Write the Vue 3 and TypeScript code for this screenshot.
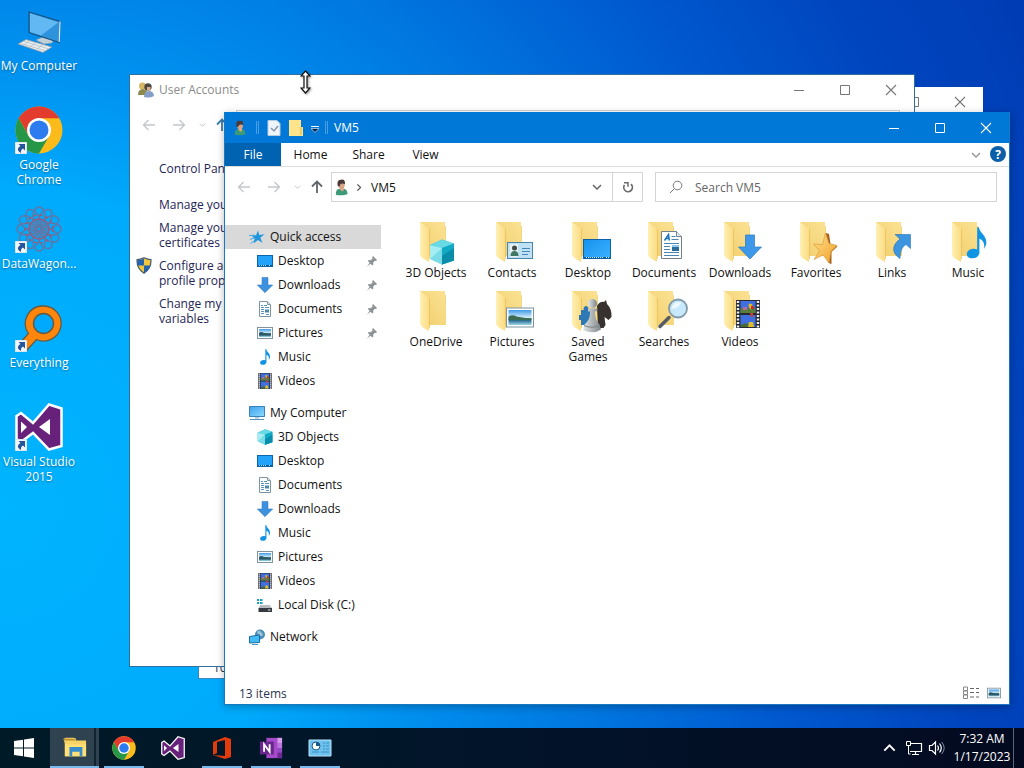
<script setup lang="ts">
interface Shortcut { icon: string; label: string; linked: boolean }
interface TreeItem { icon: string; label: string; pinned?: boolean }
interface TreeGroup { icon: string; label: string; selected?: boolean; items: TreeItem[] }
interface TaskItem { icon: string; label: string; running: boolean; active?: boolean }

const shortcuts: Shortcut[] = [
  { icon: 'pc', label: 'My Computer', linked: false },
  { icon: 'chrome', label: 'Google Chrome', linked: true },
  { icon: 'wagon', label: 'DataWagon...', linked: true },
  { icon: 'everything', label: 'Everything', linked: true },
  { icon: 'vs', label: 'Visual Studio 2015', linked: true },
]

const tree: TreeGroup[] = [
  {
    icon: 'star', label: 'Quick access', selected: true,
    items: [
      { icon: 'desktop', label: 'Desktop', pinned: true },
      { icon: 'download', label: 'Downloads', pinned: true },
      { icon: 'document', label: 'Documents', pinned: true },
      { icon: 'picture', label: 'Pictures', pinned: true },
      { icon: 'music', label: 'Music' },
      { icon: 'video', label: 'Videos' },
    ],
  },
  {
    icon: 'monitor', label: 'My Computer',
    items: [
      { icon: 'cube', label: '3D Objects' },
      { icon: 'desktop', label: 'Desktop' },
      { icon: 'document', label: 'Documents' },
      { icon: 'download', label: 'Downloads' },
      { icon: 'music', label: 'Music' },
      { icon: 'picture', label: 'Pictures' },
      { icon: 'video', label: 'Videos' },
      { icon: 'disk', label: 'Local Disk (C:)' },
    ],
  },
  { icon: 'network', label: 'Network', items: [] },
]

const folders: { icon: string; label: string }[] = [
  { icon: 'f-cube', label: '3D Objects' },
  { icon: 'f-contacts', label: 'Contacts' },
  { icon: 'f-desktop', label: 'Desktop' },
  { icon: 'f-documents', label: 'Documents' },
  { icon: 'f-downloads', label: 'Downloads' },
  { icon: 'f-favorites', label: 'Favorites' },
  { icon: 'f-links', label: 'Links' },
  { icon: 'f-music', label: 'Music' },
  { icon: 'folder', label: 'OneDrive' },
  { icon: 'f-pictures', label: 'Pictures' },
  { icon: 'f-games', label: 'Saved Games' },
  { icon: 'f-searches', label: 'Searches' },
  { icon: 'f-videos', label: 'Videos' },
]

const accountLinks: { lines: string[]; shield?: boolean }[] = [
  { lines: ['Manage your'] },
  { lines: ['Manage your', 'certificates'] },
  { lines: ['Configure ad', 'profile prope'], shield: true },
  { lines: ['Change my', 'variables'] },
]

const tasks: TaskItem[] = [
  { icon: 'explorer', label: 'File Explorer', running: true, active: true },
  { icon: 'chrome', label: 'Google Chrome', running: true },
  { icon: 'vs', label: 'Visual Studio', running: false },
  { icon: 'office', label: 'Office', running: true },
  { icon: 'onenote', label: 'OneNote', running: true },
  { icon: 'panel', label: 'Control Panel', running: true },
]
</script>

<template>
  <div class="screen">
    <svg class="sprites" width="0" height="0" aria-hidden="true">
      <defs>
        <linearGradient id="gFlap" x1="0" x2="1" y1="0" y2="0"><stop offset="0" stop-color="#fff0b4" /><stop offset="1" stop-color="#fbdc83" /></linearGradient>
        <linearGradient id="gBack" x1="0" x2="1" y1="1" y2="0"><stop offset="0" stop-color="#f2ce6c" /><stop offset="1" stop-color="#fbe294" /></linearGradient>
        <linearGradient id="gBlue" x1="0" x2="1" y1="0" y2="1"><stop offset="0" stop-color="#1592ee" /><stop offset="1" stop-color="#3db2ff" /></linearGradient>
        <linearGradient id="gScreen" x1="0" x2="1" y1="0" y2="1"><stop offset="0" stop-color="#3c9fec" /><stop offset="1" stop-color="#8fdcff" /></linearGradient>
        <linearGradient id="gSky" x1="0" x2="0" y1="0" y2="1"><stop offset="0" stop-color="#3f9be8" /><stop offset=".5" stop-color="#d3ecfa" /><stop offset=".52" stop-color="#3f7868" /><stop offset=".7" stop-color="#2c6f8c" /><stop offset="1" stop-color="#9cd8ee" /></linearGradient>
        <linearGradient id="gStar" x1="0" x2="1" y1="0" y2="1"><stop offset="0" stop-color="#ffe08a" /><stop offset="1" stop-color="#f0a02c" /></linearGradient>
        <linearGradient id="gPiece" x1="0" x2="1" y1="0" y2="0"><stop offset="0" stop-color="#e3e7e9" /><stop offset="1" stop-color="#7d8488" /></linearGradient>
      </defs>

      <symbol id="star" viewBox="0 0 16 16"><path d="M9 1.500 10.300 6l5.200-.8-4.200 3.600L13.500 14 9 11l-4.500 3.500 1.200-5L2.500 6.700l4.600-.4z" fill="#2196dd" /><path d="M0 6.500l6-.3M1 10.500l4-1.500M1.500 14.500l4-3" stroke="#46aee6" fill="none" /></symbol>
      <symbol id="desktop" viewBox="0 0 28 20"><rect x=".5" y=".5" width="27" height="19" fill="url(#gBlue)" stroke="#0c61a8" /><path d="M1 18.500h26" stroke="#0b5f9f" /><path d="M3 18.500h18M23 18.500h3" stroke="#cfe8fb" stroke-dasharray="1 1" /></symbol>
      <symbol id="desktop-s" viewBox="0 0 16 16"><rect x=".5" y="2.500" width="15" height="11" fill="#22a3fa" stroke="#0c66a8" /><path d="M1 12.500h14" stroke="#0b5b96" /><path d="M2 12.500h7M12 12.500h2" stroke="#a5daff" stroke-dasharray="1 1" /></symbol>
      <symbol id="download" viewBox="0 0 16 16"><path d="M5 0.500h6V8h4.700L8 15.700.3 8H5z" fill="#3d92e0" stroke="#2470b8" stroke-width=".5" /></symbol>
      <symbol id="document" viewBox="0 0 16 16"><path d="M2.500.5h8l3 3v12h-11z" fill="#fff" stroke="#7f94a2" /><path d="M10.500.5v3h3" fill="#dce8ef" stroke="#7f94a2" /><path d="M4 4.500h2M7 4.500h3M4 6.500h3M8 6.500h4M4 8.500h3M4 10.500h3M4 12.500h3M9 13.500h3" stroke="#5a93b6" /><rect x="8" y="8.500" width="4" height="3" fill="#4a88ad" /></symbol>
      <symbol id="picture" viewBox="0 0 28 20"><rect x=".5" y=".5" width="27" height="19" fill="#fff" stroke="#7b93a4" /><rect x="2.500" y="2.500" width="23" height="15" fill="url(#gSky)" /><path d="M2.500 9q4-2.500 8 0l15 2.500v1h-23z" fill="#3c6d54" /></symbol>
      <symbol id="picture-s" viewBox="0 0 16 16"><rect x=".5" y="2.500" width="15" height="11" fill="#fff" stroke="#8394a1" /><rect x="2" y="4" width="12" height="8" fill="url(#gSky)" /><path d="M2 8q2-2 5 0l7 1.500v1H2z" fill="#2d5866" /></symbol>
      <symbol id="music" viewBox="0 0 16 24"><path d="M8.500 0h1.300c.3 4 5.700 6 5.700 11.500 0 2-.7 3.500-1.800 5 .8-4.200-.6-6.700-3.500-7.800V19c0 3-2.400 4.700-5.200 4.700C2.600 23.700.6 22.500.6 20.500c0-2.400 2.600-4.100 5.400-4.100.9 0 1.700.1 2.500.5z" fill="#1194e4" /></symbol>
      <symbol id="video" viewBox="0 0 24 28"><path d="M0 0h24v28H0z" fill="#272b31" /><path d="M2 1v27M22 1v27" stroke="#eef0f2" stroke-width="2.400" stroke-dasharray="2 1.500" /><path d="M4.500 1h15v12h-15zM4.500 15h15v12h-15z" fill="#3f6fe0" /><path d="M4.500 9c4-3 6 1 8-1s5 1 7 0v5h-15z" fill="#5b7d3a" /><path d="M14 3.500c3 0 3 3 1.500 6-3-1-4-6-1.500-6z" fill="#e4b81a" /><path d="M15 6h3v3h-3z" fill="#c52d2a" /><path d="M7 7h4v3H7z" fill="#b66aa6" /><path d="M13 22h4l1 5h-6z" fill="#e0bd23" /><path d="M4.500 25l5-2 3 2-1 2h-7z" fill="#466b35" /><path d="M14 13h3v4h-2z" fill="#d33e28" /></symbol>
      <symbol id="cube" viewBox="0 0 26 26"><path d="m13 .5 12 4v17l-12 4-12-6V6z" fill="#33bfd3" /><path d="M1 6 13 .5l12 4L13 9z" fill="#69d9e6" /><path d="M1 6l12 3v16.500L1 20z" fill="#a5edf2" /><path d="M13 9l12-4.500v17l-12 4z" fill="#12a9c4" /><path d="M1 20 13 9v16.500z" fill="#79dce6" /><path d="m13 17 12-8v12.500l-12 4z" fill="#098dab" /></symbol>
      <symbol id="monitor" viewBox="0 0 16 16"><path d="M0 1.500h16v10H0z" fill="url(#gScreen)" /><path d="M.5 1.500h15v10H.5z" fill="none" stroke="#3983b8" /><path d="M6 12h4v1.500H6z" fill="#a9c4d3" /><path d="M1 14.500h14" stroke="#4c8fb9" /></symbol>
      <symbol id="disk" viewBox="0 0 16 16"><path d="M0 2h2v2H0zM3 2h2.500v2H3zM0 5h2v2H0zM3 5h2.500v2H3z" fill="#17a4b9" /><path d="M3.500 8h9l2.500 3H1.500z" fill="#b4babd" /><path d="M1.500 11H15v4H1.500z" fill="#343a3f" /><path d="M11 13h2.500" stroke="#d8f3df" /></symbol>
      <symbol id="network" viewBox="0 0 16 16"><circle cx="11" cy="5.500" r="5" fill="#4b8fb9" /><path d="M8 3c2-3 4 0 6 2-1 4-4 2-6-2z" fill="#9dc4d2" /><path d="M.5 7.500 10.500 6v7.500l-10 .5z" fill="#45bbf5" stroke="#1a70a4" /><path d="M3 15.500h6" stroke="#4a9acb" /></symbol>
      <symbol id="pin" viewBox="0 0 12 12"><path d="m7 1 4 4-1 1-1-.2L7.200 7.600l.2 2L6.300 10.500 4.500 8.700 1 11.500l2.600-3.700-1.800-1.700.9-1 2 .2 1.800-1.700L6.200 2z" fill="#8d9498" /></symbol>
      <symbol id="user" viewBox="0 0 16 20"><path d="M1 19c0-5 1-7 5-7.500h4c4 0 5 3 5.500 6.500-3 2-11 2-14.500 1z" fill="#3d9a77" /><path d="M6 10h4.500l.5 3-2 2-3-2.500z" fill="#dca987" /><ellipse cx="8" cy="6.500" rx="4" ry="5" fill="#d9a384" /><path d="M3.500 8C2 3 4 0 8 .5c3-1 5 2 4 5.500C9 4.500 6 5 5.500 9z" fill="#493b39" /></symbol>
      <symbol id="users" viewBox="0 0 16 16"><circle cx="4.500" cy="4" r="3.500" fill="#d5b762" /><path d="M0 13q0-6 5-6 4 0 5 6z" fill="#8d8a4b" /><circle cx="10" cy="5" r="3.700" fill="#4d483f" /><path d="M9 5h3.500v3.500H9z" fill="#d7b292" /><path d="M6 15q0-6 5-6 4.500 0 5 5-4 2.500-10 1z" fill="#859fca" /></symbol>
      <symbol id="shield" viewBox="0 0 16 18"><path d="M8 .8q4 2 7.300 2Q16 12 8 17.300 0 12 .7 2.800 4 2.800 8 .8z" fill="#f0c73f" stroke="#46596c" stroke-width="1.300" /><path d="M8 1.500V9H1.200Q.8 6 1.200 3.300 5 3 8 1.500zM8 9h6.600q-1.200 5-6.600 7.700z" fill="#2463ad" /></symbol>

      <symbol id="folder" viewBox="0 0 48 48"><path d="M8 4h25v18h1v16H17z" fill="url(#gBack)" /><path d="M33.500 8v29.500" stroke="#f4d783" /><path d="M8 4l9 7v33l-7-4-2-3z" fill="url(#gFlap)" /><path d="M17.500 11v30" stroke="#e5bf5c" stroke-width=".7" /></symbol>
      <symbol id="f-cube" viewBox="0 0 48 48"><use href="#folder" width="48" height="48" /><use href="#cube" x="17" y="21" width="26" height="26" /></symbol>
      <symbol id="f-contacts" viewBox="0 0 48 48"><use href="#folder" width="48" height="48" /><rect x="19.500" y="24.500" width="25" height="16" fill="#bfe1f3" stroke="#4a86ab" /><path d="M22 26h8v13h-8z" fill="#e9f2f2" /><circle cx="26.500" cy="30" r="2.500" fill="#3e4948" /><path d="M22.500 38q0-5 4-5t4 5z" fill="#407a62" /><path d="M34 30.500h8M34 33.500h8M34 36.500h6" stroke="#4588b8" /></symbol>
      <symbol id="f-desktop" viewBox="0 0 48 48"><use href="#folder" width="48" height="48" /><use href="#desktop" x="19" y="21" width="28" height="20" /></symbol>
      <symbol id="f-documents" viewBox="0 0 48 48"><use href="#folder" width="48" height="48" /><path d="M21.500 13.500h15l5 5v22h-20z" fill="#fff" stroke="#74828d" /><path d="M36.500 13.500v5h5" fill="#e2eaf0" stroke="#74828d" /><path d="m24.500 22.500 4-6 .8 6M26 20.500h3" fill="none" stroke="#1672bd" stroke-width="1.500" /><path d="M31.500 18.500h4M31.500 21.500h7M24 25.500h15M24 28.500h6M24 31.500h6M24 34.500h15M24 37.500h15" stroke="#4c86b2" /><path d="M32 27h7v6h-7z" fill="#2c6c9b" /><path d="M32 27h7v2h-7z" fill="#8ec9ec" /></symbol>
      <symbol id="f-downloads" viewBox="0 0 48 48"><use href="#folder" width="48" height="48" /><path d="M29.500 17h9v12h7L34 41 22.500 29h7z" fill="#3d98ea" stroke="#2978bd" stroke-width=".7" /></symbol>
      <symbol id="f-favorites" viewBox="0 0 48 48"><use href="#folder" width="48" height="48" /><path d="m34 15 3 1 1.500 10 7 2.500-6 5.500L39.500 46l-3-1z" fill="#a4621c" /><path d="m33.500 15 3.500 10.500 8 2-6 6L37 45l-6-8-9 4.500L27.500 33l-6-7 9 .5z" fill="url(#gStar)" stroke="#d69332" stroke-width=".6" /></symbol>
      <symbol id="f-links" viewBox="0 0 48 48"><use href="#folder" width="48" height="48" /><path d="M27 16.500h15.500v14L38 26.500q-6 3-6 14-8-5-6-12 1.500-4.500 6-7.500z" fill="#3d95df" stroke="#2771b5" stroke-width=".6" /></symbol>
      <symbol id="f-music" viewBox="0 0 48 48"><use href="#folder" width="48" height="48" /><use href="#music" x="22" y="9" width="21" height="32" /></symbol>
      <symbol id="f-pictures" viewBox="0 0 48 48"><use href="#folder" width="48" height="48" /><use href="#picture" x="18" y="20" width="28" height="21" /></symbol>
      <symbol id="f-games" viewBox="0 0 48 48"><use href="#folder" width="48" height="48" /><path d="M17 23h3a2.500 2.500 0 1 1 4 0h4v15h-4v3h-3v-3h-4v-5h-2v-5h2z" fill="#2e78b5" /><path d="M33 19q3-5 7-4l2-2 1 4q5 5 4.500 13l-3 3-4-3 1 8-2 3H34z" fill="#373130" /><ellipse cx="28.500" cy="16.500" rx="4.500" ry="4.500" fill="url(#gPiece)" /><path d="M24 21.500h9.500l-1 3h-1.500q-.5 8 4.500 13l1.500 5q-7 5-18 1l1.500-6q6-5 5.500-13h-2z" fill="url(#gPiece)" /><path d="M20 38.500q8 3.500 16 0" fill="none" stroke="#7b8285" /></symbol>
      <symbol id="f-searches" viewBox="0 0 48 48"><use href="#folder" width="48" height="48" /><path d="m20 39.500 9-9" stroke="#555c62" stroke-width="3.500" stroke-linecap="round" /><circle cx="38" cy="21.500" r="9" fill="#c4e8fb" fill-opacity=".94" stroke="#8399a8" stroke-width="1.800" /><path d="M31.500 22a7 7 0 0 1 10-6q-3 5-10 6z" fill="#edf9ff" /></symbol>
      <symbol id="f-videos" viewBox="0 0 48 48"><use href="#folder" width="48" height="48" /><use href="#video" x="20" y="13" width="24" height="28" /></symbol>

      <symbol id="pc" viewBox="0 0 48 48"><path d="m21 33 7-3 11 2-2 4-8 1z" fill="#c3d0d8" stroke="#8b9ba6" stroke-width=".6" /><path d="m14 5 31 9.500-.8 21L14 25.500z" fill="#2e92dd" stroke="#18527f" stroke-width="1.200" /><path d="m15 6.300 28.500 9L26 28.500 15 25z" fill="#62b8f2" /><path d="M45 14.500 44.200 35" stroke="#dcebf5" stroke-width="1.200" /><path d="m3 37 8-4.500 26 7.500-9 5.500z" fill="#e9eef1" stroke="#8b979f" stroke-width=".8" /><path d="m6 36.500 24 7.200M9 34.500l24 7.200M9 38l6-4.500M15 40l6-4.500M22 42l6-4.500" stroke="#b3bfc7" stroke-width=".8" /></symbol>
      <symbol id="chrome" viewBox="0 0 48 48"><circle cx="24" cy="24" r="23.500" fill="#fbbc1b" /><path d="M3.650 12.250A23.500 23.500 0 0 1 44.350 12.250H24L14 30z" fill="#e33b2e" /><path d="M3.650 12.250A23.500 23.500 0 0 0 24 47.500l10.200-17.600L24 24l-10.200 5.900z" fill="#269747" /><circle cx="24" cy="24" r="12" fill="#fff" /><circle cx="24" cy="24" r="9.500" fill="#2c7cf0" /></symbol>
      <symbol id="wagon" viewBox="0 0 48 48"><g fill="none" stroke="#5f78a8" stroke-width="1.500"><g id="petals"><ellipse cx="24" cy="12" rx="6" ry="10" /><ellipse cx="24" cy="36" rx="6" ry="10" /><ellipse cx="12" cy="24" rx="10" ry="6" /><ellipse cx="36" cy="24" rx="10" ry="6" /></g><use href="#petals" transform="rotate(30 24 24)" /><use href="#petals" transform="rotate(60 24 24)" /><circle cx="24" cy="24" r="10" stroke="#8f5f83" /><circle cx="24" cy="24" r="14" stroke="#985c78" stroke-dasharray="3 3" /></g></symbol>
      <symbol id="everything" viewBox="0 0 48 48"><path d="M28.500 2a17.500 17.500 0 1 1-7 33.500L12 46l-7-7 8.500-9.500A17.500 17.500 0 0 1 28.500 2z" fill="#ff860d" stroke="#675a40" stroke-width="1.300" /><circle cx="28.500" cy="19.500" r="10" fill="#00a9ff" stroke="#675a40" stroke-width="1.500" /></symbol>
      <symbol id="vs" viewBox="0 0 48 48"><path d="M1.500 13 6 10l12 10L34 1.500l12.500 4v37.500L34 46.500 18 30 6 39l-4.500-3z" fill="#68217a" stroke="#fff" stroke-width="2.500" /><path d="M6 18.500 12 24l-6 6zM24 24l11-8v16z" fill="#fff" /></symbol>
      <symbol id="link" viewBox="0 0 12 12"><path d="M0 0h12v12H0z" fill="#f3f6f9" stroke="#b8c6d2" stroke-width=".7" /><path d="M3.500 2H10v6.500L8 6.500Q5.500 7.500 6 11 1.500 8.500 3.500 5.800 4.300 4.800 5.500 4z" fill="#24549c" /></symbol>

      <symbol id="explorer" viewBox="0 0 26 24"><path d="M1 3q0-2 2-2h8q4 0 3 3h11v17H2V8z" fill="#f7d365" /><path d="M0 2h11q3 0 3 2H3Q0 4 0 2z" fill="#ba9130" /><path d="M2 8h23v13H2z" fill="#ffdf76" /><path d="M7 11h14v10h-3v-5h-8v5H7z" fill="#368ccd" /></symbol>
      <symbol id="office" viewBox="0 0 24 24"><path d="m3 6 12-5 6 2v18l-6 2-12-4 12 1V4L7 6v11l-4 2z" fill="#e43b0b" /></symbol>
      <symbol id="onenote" viewBox="0 0 26 24"><path d="M8 1h17v22H8z" fill="#a74ac9" /><path d="M20 1h5v6h-5z" fill="#d49bea" /><path d="M20 7h5v5h-5z" fill="#bb75dd" /><path d="M20 12h5v5h-5z" fill="#934bc2" /><path d="M20 17h5v6h-5z" fill="#6b2a96" /><path d="M1 5h15v14H1z" fill="#67278c" /><path d="M5.500 16V8l6 8V8" fill="none" stroke="#fff" stroke-width="2" /></symbol>
      <symbol id="panel" viewBox="0 0 24 20"><path d="M1 2h22v16H1z" fill="#6cc1ef" stroke="#b8e4f8" /><circle cx="8" cy="8" r="4" fill="#fff" /><path d="M8 8V4a4 4 0 0 1 4 4z" fill="#195785" /><circle cx="8" cy="8" r="4" fill="none" stroke="#195785" /><path d="M15 5h2M18 5h3M15 8h2M18 8h3M15 11h2M18 11h3M4 14h7M13 14h8" stroke="#3d8fc6" stroke-width="1.200" /></symbol>

      <symbol id="arrow-left" viewBox="0 0 14 12"><path d="M6.500 1 1.500 6l5 5M1.500 6H13" fill="none" stroke="currentColor" stroke-width="1.300" /></symbol>
      <symbol id="arrow-up" viewBox="0 0 12 14"><path d="M1 6.500 6 1.500l5 5M6 1.500V13" fill="none" stroke="currentColor" stroke-width="1.800" /></symbol>
      <symbol id="chevron" viewBox="0 0 10 6"><path d="m1 1 4 4 4-4" fill="none" stroke="currentColor" stroke-width="1.500" /></symbol>
      <symbol id="min" viewBox="0 0 12 12"><path d="M1 6.500h10" stroke="currentColor" /></symbol>
      <symbol id="max" viewBox="0 0 12 12"><path d="M1.500 1.500h9v9h-9z" fill="none" stroke="currentColor" /></symbol>
      <symbol id="close" viewBox="0 0 12 12"><path d="m1 1 10 10M11 1 1 11" stroke="currentColor" stroke-width="1.100" /></symbol>
    </svg>

    <main class="desktop">
      <nav class="shortcuts" aria-label="Desktop">
        <a v-for="s in shortcuts" :key="s.label" href="#" class="shortcut">
          <span class="shortcut-art">
            <svg class="i48"><use :href="'#' + s.icon" /></svg>
            <svg v-if="s.linked" class="link-badge"><use href="#link" /></svg>
          </span>
          <span>{{ s.label }}</span>
        </a>
      </nav>

      <section class="window rear" aria-label="File Explorer">
        <header class="caption">
          <span class="caption-buttons">
            <button aria-label="Minimize"><svg class="i12"><use href="#min" /></svg></button>
            <button aria-label="Maximize"><svg class="i12"><use href="#max" /></svg></button>
            <button aria-label="Close"><svg class="i12"><use href="#close" /></svg></button>
          </span>
        </header>
        <div class="grow"></div>
        <footer class="status">10</footer>
      </section>

      <section class="window accounts" aria-label="User Accounts">
        <header class="caption">
          <svg class="i16"><use href="#users" /></svg>
          <h2>User Accounts</h2>
          <span class="caption-buttons">
            <button aria-label="Minimize"><svg class="i12"><use href="#min" /></svg></button>
            <button aria-label="Maximize"><svg class="i12"><use href="#max" /></svg></button>
            <button aria-label="Close"><svg class="i12"><use href="#close" /></svg></button>
          </span>
        </header>
        <div class="nav-row">
          <button aria-label="Back" class="nav-btn faint"><svg class="arrow"><use href="#arrow-left" /></svg></button>
          <button aria-label="Forward" class="nav-btn faint"><svg class="arrow flip"><use href="#arrow-left" /></svg></button>
          <button aria-label="Recent" class="recent faint"><svg class="chev-s"><use href="#chevron" /></svg></button>
          <button aria-label="Up" class="up-btn"><svg class="up"><use href="#arrow-up" /></svg></button>
          <div class="address-box"></div>
        </div>
        <nav class="account-links" aria-label="Tasks">
          <a href="#" class="home">Control Pane</a>
          <a v-for="(l, i) in accountLinks" :key="i" href="#">
            <svg v-if="l.shield" class="shield"><use href="#shield" /></svg>
            <span v-for="t in l.lines" :key="t" class="line">{{ t }}</span>
          </a>
        </nav>
      </section>

      <section class="window explorer" aria-label="VM5">
        <header class="caption active">
          <svg class="title-user"><use href="#user" /></svg>
          <i class="sep"></i>
          <button class="quick" aria-label="Properties">
            <svg viewBox="0 0 14 16" class="q14"><path d="M1 .5h9l3 3v12H1z" fill="#edf4fa" stroke="#b8cbdc" /><path d="m4 8 3 3 4-5" fill="none" stroke="#8396a8" stroke-width="1.500" /></svg>
          </button>
          <button class="quick" aria-label="New folder">
            <svg viewBox="0 0 14 16" class="q14"><path d="M0 0h12v7h2v9H0z" fill="#ffe48c" /><path d="M11 15V7h2v8z" fill="#eccb65" /></svg>
          </button>
          <button class="more" aria-label="Customize toolbar">
            <svg viewBox="0 0 8 8" class="i8"><path d="M0 1.500h8" stroke="#fff" /><path d="M0 3.500h8l-4 4z" fill="#06224a" stroke="#fff" stroke-width=".6" /></svg>
          </button>
          <i class="sep"></i>
          <h1>VM5</h1>
          <span class="caption-buttons">
            <button aria-label="Minimize"><svg class="i12"><use href="#min" /></svg></button>
            <button aria-label="Maximize"><svg class="i12"><use href="#max" /></svg></button>
            <button aria-label="Close"><svg class="i12"><use href="#close" /></svg></button>
          </span>
        </header>

        <div class="ribbon">
          <button class="file">File</button>
          <button class="tab home-tab">Home</button>
          <button class="tab">Share</button>
          <button class="tab">View</button>
          <button class="expand" aria-label="Expand the ribbon"><svg class="chev"><use href="#chevron" /></svg></button>
          <button class="help" aria-label="Help">?</button>
        </div>

        <div class="tools">
          <button aria-label="Back" class="nav-btn faint"><svg class="arrow"><use href="#arrow-left" /></svg></button>
          <button aria-label="Forward" class="nav-btn faint"><svg class="arrow flip"><use href="#arrow-left" /></svg></button>
          <button aria-label="Recent" class="recent faint"><svg class="chev-s"><use href="#chevron" /></svg></button>
          <button aria-label="Up" class="up-btn"><svg class="up"><use href="#arrow-up" /></svg></button>
          <div class="address">
            <svg class="addr-user"><use href="#user" /></svg>
            <svg class="crumb"><use href="#chevron" /></svg>
            <a href="#">VM5</a>
            <button class="drop" aria-label="Previous locations"><svg class="chev"><use href="#chevron" /></svg></button>
            <button class="refresh" aria-label="Refresh">
              <svg viewBox="0 0 12 14" class="refresh-art"><path d="M9 4.200A4.300 4.300 0 1 1 2.500 5" fill="none" stroke="#6b6b6b" stroke-width="1.700" /><path d="M2 2.800h4v4" fill="none" stroke="#6b6b6b" stroke-width="1.500" /></svg>
            </button>
          </div>
          <label class="search">
            <svg viewBox="0 0 14 14" class="i14"><circle cx="8.500" cy="5.500" r="4.300" fill="none" stroke="#777" /><path d="M5.500 8.500 1 13" stroke="#777" /></svg>
            <input type="text" placeholder="Search VM5" aria-label="Search VM5" />
          </label>
        </div>

        <div class="body">
          <nav class="tree" aria-label="Folders">
            <ul v-for="g in tree" :key="g.label">
              <li><a href="#" class="row" :class="{ selected: g.selected }"><svg class="i16"><use :href="'#' + g.icon" /></svg>{{ g.label }}</a></li>
              <li v-for="t in g.items" :key="t.label">
                <a href="#" class="row child">
                  <svg class="i16"><use :href="'#' + (t.icon === 'desktop' || t.icon === 'picture' ? t.icon + '-s' : t.icon)" /></svg>{{ t.label }}
                  <svg v-if="t.pinned" class="pin"><use href="#pin" /></svg>
                </a>
              </li>
            </ul>
          </nav>
          <div class="files">
            <a v-for="f in folders" :key="f.label" href="#" class="file-item">
              <svg class="i48"><use :href="'#' + f.icon" /></svg>
              <span>{{ f.label }}</span>
            </a>
          </div>
        </div>

        <footer class="status">
          <span>13 items</span>
          <button aria-label="Details view">
            <svg viewBox="0 0 16 14" class="view-art"><path d="M.5 1h4v3.500h-4zM.5 5h4v3.500h-4zM.5 9h4v3.500h-4z" fill="none" stroke="#898989" /><path d="M7 2.500h4M13 2.500h3M7 6.500h4M13 6.500h3M7 11h4M13 11h3" stroke="#666" /></svg>
          </button>
          <button aria-label="Large icons view"><svg class="i14"><use href="#picture-s" /></svg></button>
        </footer>
      </section>

      <svg class="pointer" viewBox="0 0 11 24"><path d="m5.500 1 4.500 5H7v12h3l-4.500 5L1 18h3V6H1z" fill="#fff" stroke="#111" stroke-width="1.200" /></svg>
    </main>

    <footer class="taskbar">
      <button class="start" aria-label="Start">
        <svg viewBox="0 0 20 20" class="i20"><path d="m0 3 9-1.300v7.800H0zM10 1.500 20 0v9.500H10zM0 10.500h9v7.800L0 17zM10 10.500h10V20l-10-1.500z" fill="#fff" /></svg>
      </button>
      <button v-for="t in tasks" :key="t.label" class="task" :class="{ running: t.running, active: t.active }" :aria-label="t.label">
        <svg class="i24"><use :href="'#' + t.icon" /></svg>
      </button>
      <div class="tray">
        <button aria-label="Show hidden icons"><svg class="tray-chev"><use href="#chevron" /></svg></button>
        <button aria-label="Network">
          <svg viewBox="0 0 18 16" class="tray-art"><path d="M5 3.500h11.500v8H5M10.500 12v2.500M7 14.500h7" fill="none" stroke="#fff" stroke-width="1.200" /><path d="M1.500 1.500h4v4h-4zM3.500 6v8h2" fill="none" stroke="#fff" /></svg>
        </button>
        <button aria-label="Volume">
          <svg viewBox="0 0 18 16" class="tray-art"><path d="M1.500 5.500H4L7.500 2v12L4 10.500H1.500zM9.500 5.500q2 2.500 0 5M11.500 3.500q3.500 4.500 0 9" fill="none" stroke="#fff" stroke-width="1.200" /><path d="M13.700 2q5 6 0 12" fill="none" stroke="#7d8aa0" /></svg>
        </button>
        <button class="clock"><span>7:32 AM</span><span>1/17/2023</span></button>
      </div>
      <button class="show-desktop" aria-label="Show desktop"></button>
    </footer>
  </div>
</template>

<style>
body { margin: 0; }
</style>

<style scoped>
.screen {
  display: flex;
  flex-direction: column;
  height: 100vh;
  overflow: hidden;
  font: 12px/15px "Open Sans", "Noto Sans", sans-serif;
  color: #111;
  background: radial-gradient(circle at 0 66%, #00b4ff 0, #00aafc 28%, #0093f0 38%, #0078e0 54%, #005ad0 70%, #0045be 86%, #003cb4 100%);
}
.screen *, .screen *::before { box-sizing: border-box; }
.sprites { position: absolute; }
a { color: inherit; text-decoration: none; }
button { padding: 0; border: 0; background: none; font: inherit; color: inherit; display: flex; align-items: center; justify-content: center; }
h1, h2 { margin: 0; font: inherit; }
ul { margin: 0; padding: 0; list-style: none; }
svg { flex: none; display: block; }
.i8 { width: 8px; height: 8px; }
.i12 { width: 12px; height: 12px; }
.i14 { width: 14px; height: 14px; }
.i16 { width: 16px; height: 16px; }
.i20 { width: 20px; height: 20px; }
.i24 { width: 24px; height: 24px; }
.i48 { width: 48px; height: 48px; }
.grow { flex: 1; }

.desktop { position: relative; flex: 1; min-height: 0; }
.shortcuts { width: 78px; padding-top: 7px; }
.shortcut {
  display: flex; flex-direction: column; align-items: center; gap: 3px;
  height: 99px; text-align: center; color: #fff; text-shadow: 0 1px 2px #0006;
}
.shortcut-art { position: relative; }
.link-badge { position: absolute; left: 0; bottom: 0; width: 12px; height: 12px; }

.window { position: absolute; display: flex; flex-direction: column; background: #fff; overflow: hidden; }
.rear { left: 198px; top: 87px; right: 41px; bottom: 49px; border: 1px solid #3f84bd; border-top: 0; border-right: 0; }
.accounts { left: 130px; top: 75px; right: 110px; bottom: 62px; outline: 1px solid #2f6f9f; }
.explorer { left: 224px; top: 112px; right: 14px; bottom: 23px; border: 1px solid #1878c0; border-top: 0; box-shadow: 0 2px 8px #0004; }

.caption { display: flex; align-items: center; height: 29px; color: #8b8b8b; padding-left: 8px; flex: none; }
.caption h2 { margin-left: 5px; }
.caption-buttons { display: flex; margin-left: auto; color: #777; }
.caption-buttons button { width: 46px; height: 28px; }
.caption.active { height: 31px; background: #0078d7; color: #fff; padding-left: 9px; }
.active .caption-buttons { color: #fff; }
.title-user { width: 12px; height: 16px; margin-right: 10px; }
.sep { width: 3px; height: 13px; border: 1px solid #4aa0e2; border-width: 0 1px; }
.q14 { width: 14px; height: 16px; }
.quick { width: 22px; height: 22px; }
.quick:first-of-type { margin-left: 4px; }
.more { width: 16px; height: 22px; padding-top: 2px; margin-right: 2px; }
.active h1 { margin-left: 6px; }

.nav-row { display: flex; align-items: center; height: 30px; margin: 6px 14px 0 4px; }
.address-box { flex: 1; align-self: stretch; border: 1px solid #d0d4d8; margin-left: 2px; }
.nav-btn { width: 30px; height: 28px; color: #777; }
.faint { color: #c3c7ca; }
.arrow { width: 14px; height: 12px; }
.flip { transform: scaleX(-1); }
.recent { width: 16px; height: 28px; }
.chev-s { width: 7px; height: 4px; }
.up-btn { width: 24px; height: 28px; color: #606468; }
.up { width: 12px; height: 14px; }
.accounts .up { color: #3b7fae; }

.account-links { display: flex; flex-direction: column; padding: 21px 0 0 29px; gap: 8px; color: #1e2456; }
.account-links .home { margin-bottom: 13px; }
.account-links a { position: relative; white-space: nowrap; }
.line { display: block; }
.shield { position: absolute; left: -23px; top: -1px; width: 16px; height: 17px; }

.ribbon { display: flex; align-items: stretch; height: 24px; border-bottom: 1px solid #dcdde0; flex: none; }
.file { width: 56px; background: #0063b1; color: #fff; }
.tab { width: 57px; }
.home-tab { width: 59px; }
.expand { margin-left: auto; width: 20px; color: #9a9a9a; }
.chev { width: 10px; height: 6px; }
.help { width: 16px; height: 16px; margin: 3px 3px 0 4px; border-radius: 50%; background: #0b5fa8; color: #fff; font-weight: 700; }

.tools { display: flex; align-items: center; height: 30px; margin: 5px 12px 0 4px; flex: none; }
.address { display: flex; align-items: center; flex: 312 1 312px; height: 30px; margin-left: 2px; border: 1px solid #d5d5d5; }
.addr-user { width: 13px; height: 17px; margin-left: 3px; }
.crumb { width: 8px; height: 5px; margin: 0 8px 0 7px; color: #555; transform: rotate(-90deg); }
.drop { margin-left: auto; width: 30px; height: 28px; color: #666; }
.refresh { width: 30px; height: 28px; border-left: 1px solid #d5d5d5; }
.refresh-art { width: 12px; height: 14px; }
.search { display: flex; align-items: center; flex: 342 1 342px; height: 30px; margin-left: 12px; padding-left: 13px; border: 1px solid #d5d5d5; }
.search input { flex: 1; min-width: 0; margin-left: 12px; padding: 0; border: 0; outline: 0; background: none; font: inherit; color: #555; }
.search input::placeholder { color: #666; opacity: 1; }

.body { display: flex; flex: 1; min-height: 0; margin-top: 23px; }
.tree { width: 156px; flex: none; }
.tree ul { margin-bottom: 8px; }
.row { display: flex; align-items: center; height: 24px; padding: 0 0 1px 24px; white-space: nowrap; }
.row .i16 { margin-right: 5px; }
.child { padding-left: 32px; }
.selected { background: #d9d9d9; }
.pin { width: 12px; height: 12px; margin: 0 3px 0 auto; }
.files { flex: 1; display: grid; grid-template-columns: repeat(auto-fill, 76px); grid-auto-rows: max-content; row-gap: 6px; margin: -7px 0 0 17px; }
.file-item { display: flex; flex-direction: column; align-items: center; text-align: center; height: 63px; }
.file-item span { max-width: 70px; margin-top: -1px; }

.status { display: flex; align-items: center; height: 22px; padding: 0 8px 0 14px; gap: 8px; color: #2b3550; flex: none; }
.status span { margin-right: auto; }
.view-art { width: 16px; height: 14px; }

.pointer { position: absolute; left: 300px; top: 70px; width: 11px; height: 24px; filter: drop-shadow(1px 1px 1px #0006); }

.taskbar { position: relative; display: flex; height: 40px; flex: none; color: #fff; background: linear-gradient(90deg, #001a27, #02142a 50%, #030a20); }
.start { width: 48px; }
.task { position: relative; width: 49px; }
.start + .task { margin-left: 2px; }
.task.running::before { content: ""; position: absolute; left: 5px; right: 4px; bottom: 0; height: 2px; background: #76b9ed; }
.task.active { background: linear-gradient(90deg, #2e434f 44px, #12242f 44px, #12242f 46px, #2e434f 46px); }
.task.active::before { left: 0; right: 0; }
.tray { display: flex; align-items: center; margin-left: auto; gap: 5px; }
.tray-chev { width: 13px; height: 8px; transform: scaleY(-1); margin-right: 4px; }
.tray-art { width: 18px; height: 16px; }
.clock { flex-direction: column; width: 62px; line-height: 18px; }
.show-desktop { width: 11px; border-left: 1px solid #5a6680; }
</style>
